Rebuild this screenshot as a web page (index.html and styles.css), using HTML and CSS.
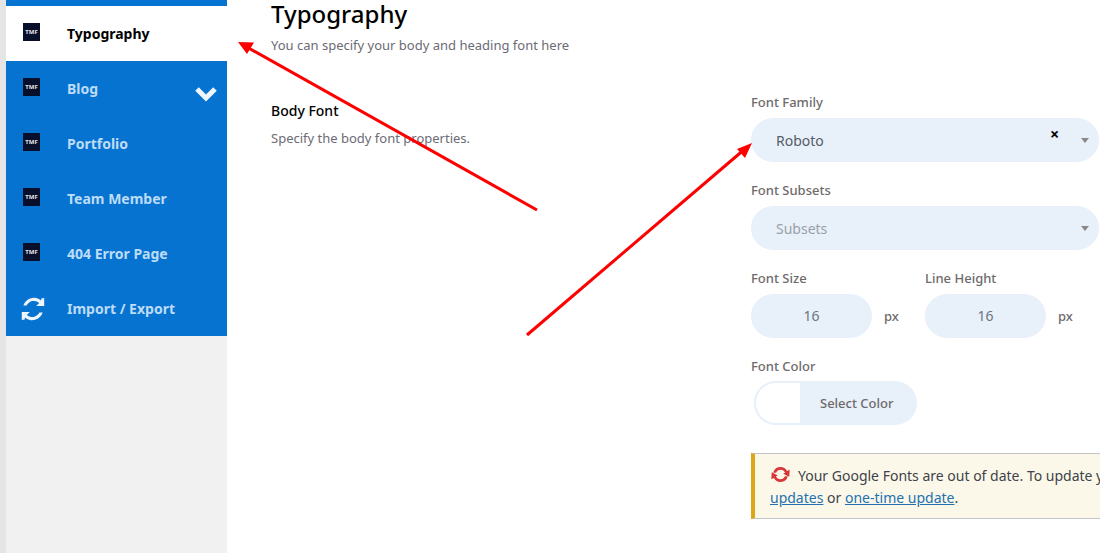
FILE: index.html
```html
<!DOCTYPE html>
<html lang="en">
<head>
    <meta charset="UTF-8">
    <title>Typography</title>
    <link rel="stylesheet" href="styles.css">
</head>
<body>
    <div class="page">
        <div class="admin-strip"></div>

        <nav class="sidebar">
            <div class="nav-top"></div>
            <a class="nav-item active"><span class="tmf">TMF</span><span class="nav-text">Typography</span></a>
            <a class="nav-item"><span class="tmf">TMF</span><span class="nav-text">Blog</span>
                <svg class="chevron" viewBox="0 0 24 16"><path d="M3 3l9 9 9-9" fill="none" stroke="#eef5fc" stroke-width="5"/></svg>
            </a>
            <a class="nav-item"><span class="tmf">TMF</span><span class="nav-text">Portfolio</span></a>
            <a class="nav-item"><span class="tmf">TMF</span><span class="nav-text">Team Member</span></a>
            <a class="nav-item"><span class="tmf">TMF</span><span class="nav-text">404 Error Page</span></a>
            <a class="nav-item">
                <svg class="sync-icon" viewBox="0 0 24 24" fill="#eef5fc">
                    <path d="M20.2 1.5l3 -0.5v8h-8l3-3a8 8 0 0 0-12.6 2.6H2.300A11.200 11.200 0 0 1 20.200 3.500z"/>
                    <path d="M3.800 22.500l-3 .5v-8h8l-3 3a8 8 0 0 0 12.600-2.600h3.300A11.200 11.200 0 0 1 3.800 20.500z"/>
                </svg>
                <span class="nav-text">Import / Export</span>
            </a>
        </nav>

        <main class="content">
            <h1>Typography</h1>
            <p class="subtitle">You can specify your body and heading font here</p>

            <section class="font-section">
                <div class="section-info">
                    <h2>Body Font</h2>
                    <p>Specify the body font properties.</p>
                </div>

                <div class="fields">
                    <label class="field-label">Font Family</label>
                    <div class="select">
                        <span class="select-value">Roboto</span>
                        <span class="select-clear">×</span>
                        <span class="caret"></span>
                    </div>

                    <label class="field-label">Font Subsets</label>
                    <div class="select">
                        <span class="select-value placeholder">Subsets</span>
                        <span class="caret"></span>
                    </div>

                    <div class="size-row">
                        <div class="size-field">
                            <label class="field-label">Font Size</label>
                            <div class="size-input"><span class="size-box">16</span><span class="unit">px</span></div>
                        </div>
                        <div class="size-field">
                            <label class="field-label">Line Height</label>
                            <div class="size-input"><span class="size-box">16</span><span class="unit">px</span></div>
                        </div>
                    </div>

                    <label class="field-label">Font Color</label>
                    <div class="color-picker">
                        <span class="color-swatch"></span>
                        <span class="color-text">Select Color</span>
                    </div>

                    <div class="notice">
                        <p>
                            <svg class="notice-icon" viewBox="0 0 24 24" fill="#d63638">
                                <path d="M12 3.500a8.500 8.500 0 0 1 7.500 4.500l3-1.500-.5 8-7-3.500 2.200-1.100a5.500 5.500 0 0 0-10.200.100H3.700A8.500 8.500 0 0 1 12 3.500z"/>
                                <path d="M12 20.500a8.500 8.500 0 0 1-7.500-4.500l-3 1.500 .5-8 7 3.500-2.200 1.100a5.500 5.500 0 0 0 10.200-.100h3.300A8.500 8.500 0 0 1 12 20.500z"/>
                            </svg>Your Google Fonts are out of date. To update your fonts enable<br><a>updates</a> or <a>one-time update</a>.
                        </p>
                    </div>
                </div>
            </section>
        </main>

        <!-- annotation arrows -->
        <svg class="arrows" viewBox="0 0 1100 553">
            <g stroke="#fe0000" stroke-width="3" fill="#fe0000">
                <line x1="537" y1="210" x2="245" y2="46"/>
                <line x1="527" y1="335" x2="746" y2="148"/>
            </g>
            <path d="M238 42l16 .5-7 11.500z" fill="#fe0000"/>
            <path d="M752 143l-7 15-8-9z" fill="#fe0000"/>
        </svg>
    </div>
</body>
</html>
```

FILE: styles.css
```css
* {
    margin: 0;
    padding: 0;
    box-sizing: border-box;
}

html, body {
    height: 100%;
    overflow: hidden;
}

body {
    font-family: "Noto Sans", "Open Sans", sans-serif;
    background: #fff;
    color: #6b6b75;
}

.page {
    position: relative;
    display: flex;
    width: 1100px;
    height: 553px;
    overflow: hidden;
}

.admin-strip {
    width: 6px;
    flex: none;
    background: #e5e5e5;
}

.sidebar {
    width: 221px;
    flex: none;
    background: #f1f1f1;
}

.nav-top {
    height: 6px;
    background: #0773d0;
}

.nav-item {
    display: flex;
    align-items: center;
    position: relative;
    height: 55px;
    padding-left: 17px;
    background: #0773d0;
    color: #bcdcf7;
    font-size: 14px;
    font-weight: 700;
}

.nav-item.active {
    background: #fff;
    color: #000;
}

.tmf {
    width: 17px;
    height: 18px;
    margin-bottom: 4px;
    background: #080f2a;
    color: #e6e6e6;
    font-size: 6px;
    font-weight: 700;
    line-height: 18px;
    text-align: center;
}

.nav-text {
    margin-left: 27px;
    margin-bottom: 1px;
}

.chevron {
    position: absolute;
    left: 188px;
    top: 25px;
    width: 24px;
    height: 16px;
}

.sync-icon {
    width: 24px;
    height: 24px;
    margin-left: -2px;
    margin-right: -5px;
}

.content {
    flex: 1;
    min-width: 0;
    padding-left: 44px;
}

h1 {
    font-size: 24px;
    font-weight: 500;
    line-height: 28px;
    color: #000;
}

.subtitle {
    font-size: 13px;
    line-height: 18px;
    margin-top: 8px;
}

.font-section {
    display: flex;
    margin-top: 39px;
}

.section-info {
    width: 480px;
    flex: none;
    padding-top: 8px;
}

.section-info h2 {
    font-size: 14px;
    font-weight: 500;
    line-height: 20px;
    color: #000;
}

.section-info p {
    font-size: 13px;
    line-height: 18px;
    margin-top: 8px;
}

.fields {
    flex: none;
    width: 348px;
}

.field-label {
    display: block;
    font-size: 13px;
    font-weight: 500;
    line-height: 18px;
    color: #6e6a6a;
    margin-bottom: 7px;
}

.select {
    position: relative;
    display: flex;
    align-items: center;
    height: 44px;
    padding-left: 25px;
    margin-bottom: 19px;
    border-radius: 22px;
    background: #e8f0fa;
    font-size: 14px;
    color: #555d66;
}

.placeholder {
    color: #9a9fa6;
}

.select-clear {
    position: absolute;
    left: 299px;
    top: 6px;
    font-size: 16px;
    font-weight: 700;
    line-height: 20px;
    color: #000;
}

.caret {
    position: absolute;
    left: 330px;
    top: 20px;
    border-left: 4px solid transparent;
    border-right: 4px solid transparent;
    border-top: 5px solid #888;
}

.size-row {
    display: flex;
    margin-bottom: 19px;
}

.size-field {
    width: 177px;
}

.size-input {
    display: flex;
    align-items: center;
}

.size-box {
    width: 121px;
    height: 44px;
    border-radius: 22px;
    background: #e8f0fa;
    font-size: 14px;
    line-height: 44px;
    text-align: center;
    color: #6b7580;
}

.unit {
    margin-left: 12px;
    font-size: 13px;
    font-weight: 500;
    color: #6e6a6a;
}

.color-picker {
    display: flex;
    align-items: center;
    width: 163px;
    height: 44px;
    margin-left: 3px;
    margin-top: -1px;
    border-radius: 22px;
    background: #e8f0fa;
}

.color-swatch {
    width: 46px;
    height: 44px;
    border: 2px solid #e8f0fa;
    border-right: 0;
    border-radius: 22px 0 0 22px;
    background: #fff;
}

.color-text {
    margin-left: 20px;
    font-size: 13px;
    font-weight: 500;
    color: #6e6a6a;
}

.notice {
    width: 700px;
    margin-top: 28px;
    padding: 10px 15px 9px 15px;
    background: #fcf8e9;
    border: 1px solid #c3c4c7;
    border-left: 4px solid #dba617;
    border-right: 0;
    color: #3c434a;
    font-size: 14px;
    line-height: 22px;
}

.notice a {
    color: #2271b1;
    text-decoration: underline;
}

.notice-icon {
    width: 21px;
    height: 21px;
    margin-right: 7px;
    vertical-align: -4px;
}

.arrows {
    position: absolute;
    left: 0;
    top: 0;
    width: 1100px;
    height: 553px;
    pointer-events: none;
}
```
